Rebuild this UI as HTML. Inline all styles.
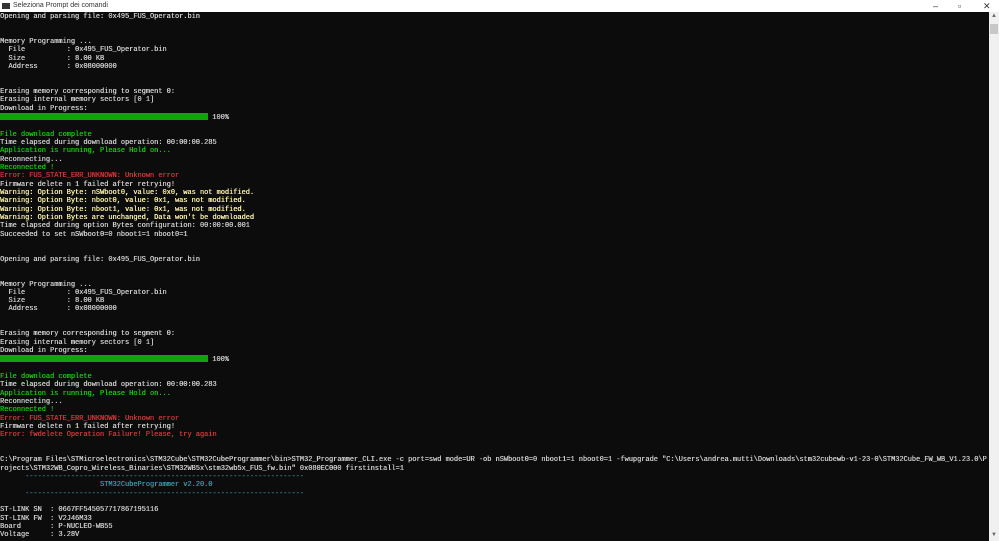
<!DOCTYPE html>
<html><head><meta charset="utf-8"><style>
html,body{margin:0;padding:0;width:999px;height:541px;overflow:hidden;background:#0c0c0c}
#tb{position:absolute;left:0;top:0;width:999px;height:12px;background:#fff;font:7px "Liberation Sans",sans-serif;color:#333}
#tb .ic{position:absolute;left:2px;top:3px;width:8px;height:6px;background:#333}
#tb .t{position:absolute;left:13px;top:1px;line-height:10px}
#tb .c{position:absolute;top:0;line-height:12px;font-size:9px;color:#333}
#sb{position:absolute;left:989px;top:12px;width:10px;height:529px;background:#f0f0f0}
#sb .th{position:absolute;left:1px;top:12px;width:8px;height:10px;background:#c8c8c8}
#sb .a{position:absolute;left:2px;font-size:6px;color:#666}
pre{position:absolute;left:0;top:13px;margin:0;font-family:"Liberation Mono",monospace;font-size:6.95px;line-height:8.333px;color:#cccccc;white-space:pre;text-shadow:0.3px 0 0 currentColor}
.g{color:#16c60c}.r{color:#d13438}.y{color:#f9f1a5}.d{color:#3a96aa}
.bar{display:inline-block;width:208px;height:7px;background:#13a10e;vertical-align:-1px}
</style></head><body>
<div id="tb"><div class="ic"></div><div class="t">Seleziona Prompt dei comandi</div>
<div class="c" style="left:933px">–</div><div class="c" style="left:958px">▫</div><div class="c" style="left:983px">✕</div></div>
<pre>Opening and parsing file: 0x495_FUS_Operator.bin


Memory Programming ...
  File          : 0x495_FUS_Operator.bin
  Size          : 8.00 KB
  Address       : 0x08000000


Erasing memory corresponding to segment 0:
Erasing internal memory sectors [0 1]
Download in Progress:
<span class="bar"></span> 100%

<span class="g">File download complete</span>
Time elapsed during download operation: 00:00:00.285
<span class="g">Application is running, Please Hold on...</span>
Reconnecting...
<span class="g">Reconnected !</span>
<span class="r">Error: FUS_STATE_ERR_UNKNOWN: Unknown error</span>
Firmware delete n 1 failed after retrying!
<span class="y">Warning: Option Byte: nSWboot0, value: 0x0, was not modified.
Warning: Option Byte: nboot0, value: 0x1, was not modified.
Warning: Option Byte: nboot1, value: 0x1, was not modified.
Warning: Option Bytes are unchanged, Data won't be downloaded</span>
Time elapsed during option Bytes configuration: 00:00:00.001
Succeeded to set nSWboot0=0 nboot1=1 nboot0=1


Opening and parsing file: 0x495_FUS_Operator.bin


Memory Programming ...
  File          : 0x495_FUS_Operator.bin
  Size          : 8.00 KB
  Address       : 0x08000000


Erasing memory corresponding to segment 0:
Erasing internal memory sectors [0 1]
Download in Progress:
<span class="bar"></span> 100%

<span class="g">File download complete</span>
Time elapsed during download operation: 00:00:00.283
<span class="g">Application is running, Please Hold on...</span>
Reconnecting...
<span class="g">Reconnected !</span>
<span class="r">Error: FUS_STATE_ERR_UNKNOWN: Unknown error</span>
Firmware delete n 1 failed after retrying!
<span class="r">Error: fwdelete Operation Failure! Please, try again</span>


C:\Program Files\STMicroelectronics\STM32Cube\STM32CubeProgrammer\bin>STM32_Programmer_CLI.exe -c port=swd mode=UR -ob nSWboot0=0 nboot1=1 nboot0=1 -fwupgrade "C:\Users\andrea.mutti\Downloads\stm32cubewb-v1-23-0\STM32Cube_FW_WB_V1.23.0\P
rojects\STM32WB_Copro_Wireless_Binaries\STM32WB5x\stm32wb5x_FUS_fw.bin" 0x080EC000 firstinstall=1
<span class="d">      -------------------------------------------------------------------</span>
<span class="d">                        STM32CubeProgrammer v2.20.0</span>
<span class="d">      -------------------------------------------------------------------</span>

ST-LINK SN  : 0667FF545057717867195116
ST-LINK FW  : V2J46M33
Board       : P-NUCLEO-WB55
Voltage     : 3.28V
</pre>
<div id="sb"><div class="a" style="top:1px">▲</div><div class="th"></div><div class="a" style="top:520px">▼</div></div>
</body></html>
